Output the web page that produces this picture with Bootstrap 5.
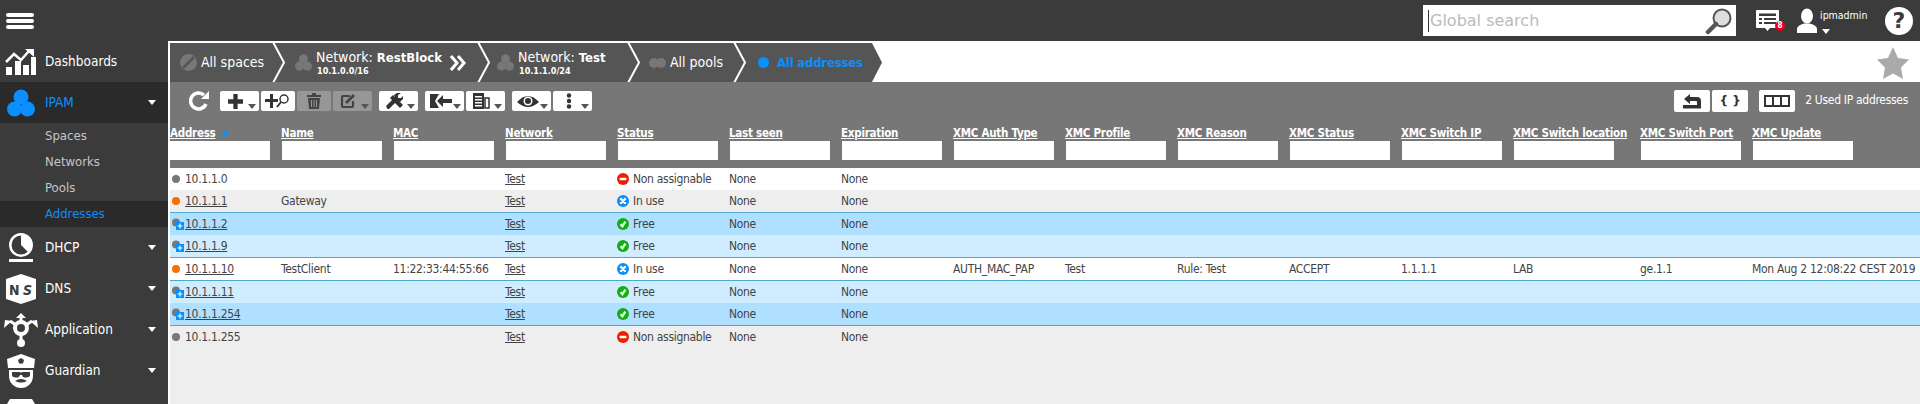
<!DOCTYPE html>
<html lang="en">
<head>
    <meta charset="UTF-8">
    <title>IPAM - All addresses</title>
    <link href="https://cdn.jsdelivr.net/npm/bootstrap@5.3.3/dist/css/bootstrap.min.css" rel="stylesheet">
    <style>
        html, body {
            height: 100%;
            overflow: hidden;
        }

        body {
            background-color: #eee;
            font-family: "DejaVu Sans", "Liberation Sans", sans-serif;
            font-stretch: condensed;
            font-size: 12px;
            letter-spacing: -0.3px;
            color: #444;
        }

        .top-bar {
            height: 41px;
            background-color: #3b3b3b;
        }

        .menu-bars {
            width: 28px;
            margin-left: 6px;
        }

        .menu-bars span {
            display: block;
            height: 4px;
            margin: 2px 0;
            background-color: #fff;
            border-radius: 2px;
        }

        .search-box {
            width: 313px;
            height: 31px;
            background-color: #fff;
            padding: 0 3px 0 5px;
        }

        .search-box span {
            border-left: 1px solid #333;
            color: #bbb;
            font-size: 16px;
            font-stretch: normal;
            letter-spacing: 0;
            padding-left: 1px;
            line-height: 22px;
        }

        .notif {
            width: 28px;
            height: 26px;
            margin-left: 19px;
        }

        .notif-count {
            position: absolute;
            left: 20px;
            top: 13px;
            width: 10px;
            height: 10px;
            border-radius: 50%;
            background-color: #e8001c;
            color: #fff;
            font-size: 8px;
            font-weight: 700;
            letter-spacing: 0;
            line-height: 10px;
            text-align: center;
        }

        .user-box {
            margin-left: 13px;
            width: 74px;
            height: 41px;
        }

        .user-box svg {
            margin-top: 8px;
            flex: none;
        }

        .user-name {
            color: #fff;
            font-size: 10.5px;
            letter-spacing: 0;
            line-height: 12px;
            padding-top: 9px;
            margin-left: 2px;
        }

        .help-dot {
            width: 28px;
            height: 28px;
            margin-left: 15px;
            margin-right: 7px;
            border-radius: 50%;
            background-color: #fff;
            color: #3b3b3b;
            font-size: 22px;
            font-weight: 700;
            font-stretch: normal;
            letter-spacing: 0;
            line-height: 28px;
            text-align: center;
        }

        .main-row {
            height: 363px;
            background-color: #3b3b3b;
        }

        .side-menu {
            width: 168px;
            flex: none;
            overflow: hidden;
            background-color: #3b3b3b;
            letter-spacing: 0;
        }

        .side-item {
            height: 41px;
            flex: none;
            color: #fff;
            font-size: 13.5px;
            text-decoration: none;
            padding-right: 12px;
        }

        .side-item.on {
            background-color: #2a2a2a;
            color: #0a8fff;
        }

        .side-ico {
            width: 45px;
            flex: none;
            display: flex;
            justify-content: center;
            padding-right: 4px;
        }

        .side-sub {
            height: 26px;
            flex: none;
            padding-left: 45px;
            color: #c6c6c6;
            font-size: 13px;
            line-height: 26px;
            text-decoration: none;
        }

        .side-sub.on {
            background-color: #2a2a2a;
            color: #0a8fff;
        }

        .tri-w {
            width: 0;
            height: 0;
            margin-left: auto;
            border-left: 4px solid transparent;
            border-right: 4px solid transparent;
            border-top: 5px solid #fff;
        }

        .work-area {
            flex: 1 1 auto;
            min-width: 0;
            background-color: #eee;
            border-left: 2px solid #fff;
            border-top: 2px solid #fff;
        }

        .crumb-row {
            height: 39px;
            background-color: #fff;
        }

        .crumb {
            height: 39px;
            flex: none;
            background-color: #555;
            color: #fff;
            font-size: 14px;
            letter-spacing: 0;
            line-height: 17px;
            white-space: nowrap;
        }

        .crumb b {
            font-size: 13px;
        }

        .crumb small {
            display: block;
            font-size: 9px;
            font-weight: 700;
            line-height: 10px;
            margin-left: 1px;
        }

        .crumb-spaces { width: 102px; padding-left: 10px; }
        .crumb-block { width: 191px; padding-left: 9px; }
        .crumb-test { width: 136px; padding-left: 6px; }
        .crumb-pools { width: 92px; padding-left: 8px; }
        .crumb-addrs {
            width: 125px;
            padding-left: 11px;
            color: #0a8fff;
            font-size: 13px;
            font-weight: 700;
            letter-spacing: -0.2px;
        }

        .crumb-sep {
            display: block;
            flex: none;
        }

        .fav-star {
            margin-left: auto;
            margin-right: 11px;
        }

        .tool-row {
            height: 43px;
            background-color: #777;
            padding-top: 9px;
        }

        .tool-refresh { margin: 0 11px 0 19px; }
        .tool-set-a { gap: 2px; }
        .tool-set-b { margin-left: 7px; }
        .tool-set-c { margin-left: 7px; gap: 2px; }
        .tool-set-d { gap: 2px; }
        .tool-set-d .tool-btn:nth-child(2) { margin-right: 9px; }

        .tool-btn {
            position: relative;
            display: inline-flex;
            align-items: center;
            justify-content: center;
            height: 20px;
            width: 39px;
            padding: 0;
            background-color: #fff;
            border: 0;
            border-radius: 2px;
            color: #333;
        }

        .tool-btn.narrow {
            width: 34px;
        }

        .tool-btn.off {
            background-color: #979797;
        }

        .tool-btn.tall {
            height: 22px;
            width: 36px;
            margin-top: -1px;
        }

        .tool-btn.has-menu::after {
            content: "";
            position: absolute;
            right: 3px;
            bottom: 2px;
            border-left: 4px solid transparent;
            border-right: 4px solid transparent;
            border-top: 5px solid #555;
        }

        .tool-btn.has-menu svg {
            margin-right: 8px;
        }

        .tool-count {
            color: #fff;
            font-size: 12px;
            margin-left: 10px;
            margin-right: 12px;
            line-height: 18px;
        }

        .addr-table {
            table-layout: fixed;
            width: 1750px;
            border-collapse: separate;
            border-spacing: 0;
        }

        .addr-table th {
            background-color: #777;
            padding: 0 0 8px 0;
            font-size: 11.5px;
            font-weight: 700;
            letter-spacing: -0.25px;
            vertical-align: top;
        }

        .addr-table th a {
            display: block;
            color: #fff;
            line-height: 16px;
            white-space: nowrap;
        }

        .addr-table th input {
            display: block;
            width: 100px;
            height: 19px;
            margin-left: 1px;
            border: 0;
            padding: 0;
        }

        .addr-table th:first-child input {
            margin-left: 0;
        }

        .addr-table td {
            height: 22px;
            padding: 0;
            white-space: nowrap;
            vertical-align: middle;
        }

        .addr-table td a {
            color: #444;
        }

        .sort-mark {
            width: 0;
            height: 0;
            margin: 3px 0 0 4px;
            border-left: 8px solid transparent;
            border-bottom: 8px solid #0a8fff;
        }

        .ip-cell {
            display: flex;
            align-items: center;
            padding-left: 2px;
        }

        .ip-ico {
            width: 13px;
            flex: none;
            display: flex;
        }

        .state-ico {
            margin-right: 4px;
            vertical-align: -2px;
        }

        tr.row-white td { background-color: #fff; }
        tr.row-grey td { background-color: #eee; }
        tr.row-blue td { background-color: #afe0ff; }
        tr.row-pale td { background-color: #d0edff; }
        tr.line-top td { height: 23px; border-top: 1px solid #4fa8cf; }
        tr.line-bottom td { height: 23px; border-bottom: 1px solid #4fa8cf; }
    </style>
</head>
<body>
<svg width="0" height="0" class="position-absolute">
    <symbol id="st-block" viewBox="0 0 12 12">
        <circle cx="6" cy="6" r="6" fill="#f01e00"/><rect x="2.5" y="4.7" width="7" height="2.6" rx="1" fill="#fff"/>
    </symbol>
    <symbol id="st-use" viewBox="0 0 12 12">
        <circle cx="6" cy="6" r="6" fill="#0a8fff"/><path d="M4 4l4 4M8 4l-4 4" stroke="#fff" stroke-width="2.4" stroke-linecap="round"/>
    </symbol>
    <symbol id="st-free" viewBox="0 0 12 12">
        <circle cx="6" cy="6" r="6" fill="#10b010"/><path d="M3.6 6.2l1.8 2 3-4.6" fill="none" stroke="#fff" stroke-width="2.2"/>
    </symbol>
    <symbol id="tri-cluster" viewBox="0 0 28 28">
        <circle cx="14" cy="8" r="7.5"/><circle cx="7.5" cy="20" r="7.5"/><circle cx="20.5" cy="20" r="7.5"/>
    </symbol>
    <symbol id="crumb-chevron" viewBox="0 0 14 39">
        <rect width="14" height="39" fill="#555"/><path d="M1-1l11 20.500L1 40" fill="none" stroke="#fff" stroke-width="2"/>
    </symbol>
</svg>

<header class="top-bar d-flex align-items-center">
    <div class="menu-bars"><span></span><span></span><span></span></div>
    <div class="search-box d-flex align-items-center ms-auto">
        <span>Global search</span>
        <svg class="ms-auto" width="28" height="28" viewBox="0 0 28 28">
            <circle cx="17" cy="11" r="8.500" fill="#ddd" stroke="#555" stroke-width="2"/>
            <path d="M11 17l-8 8" stroke="#555" stroke-width="4.500" stroke-linecap="round"/>
        </svg>
    </div>
    <div class="notif position-relative">
        <svg width="26" height="26" viewBox="0 0 26 26">
            <path d="M2 2h21a1 1 0 0 1 1 1v16a1 1 0 0 1-1 1h-8l-2.500 3-2.500-3H2a1 1 0 0 1-1-1V3a1 1 0 0 1 1-1z" fill="#fff"/>
            <path d="M4 5.500h17v2.500H4zM4 10h3v2H4zM9 10h12v2H9zM4 14h3v2H4zM9 14h12v2H9z" fill="#3b3b3b"/>
        </svg>
        <span class="notif-count">8</span>
    </div>
    <div class="user-box d-flex">
        <svg width="22" height="26" viewBox="0 0 22 26">
            <ellipse cx="11" cy="8" rx="6" ry="7.500" fill="#fff"/>
            <path d="M1 25v-4c0-3 4-4.500 7-5.500h6c3 1 7 2.500 7 5.500v4z" fill="#fff"/>
        </svg>
        <div>
            <div class="user-name">ipmadmin</div>
            <div class="tri-w ms-1 mt-2"></div>
        </div>
    </div>
    <div class="help-dot">?</div>
</header>

<div class="main-row d-flex">
    <nav class="side-menu d-flex flex-column">
        <a class="side-item d-flex align-items-center" href="#">
            <span class="side-ico">
                <svg width="32" height="28" viewBox="0 0 32 28" fill="#fff">
                    <path d="M1 14l8-8 7 6 8-9" fill="none" stroke="#fff" stroke-width="2.500"/>
                    <path d="M20 1h9v8z"/>
                    <path d="M1 19h6v8H1zM10 13h6v14h-6zM18 17h6v10h-6zM26 9h5v18h-5z"/>
                </svg>
            </span>
            Dashboards
        </a>
        <a class="side-item on d-flex align-items-center" href="#">
            <span class="side-ico"><svg width="28" height="28" fill="#0a8fff"><use href="#tri-cluster"/></svg></span>
            IPAM<span class="tri-w"></span>
        </a>
        <a class="side-sub" href="#">Spaces</a>
        <a class="side-sub" href="#">Networks</a>
        <a class="side-sub" href="#">Pools</a>
        <a class="side-sub on" href="#">Addresses</a>
        <a class="side-item d-flex align-items-center" href="#">
            <span class="side-ico">
                <svg width="26" height="30" viewBox="0 0 26 30" fill="#fff">
                    <circle cx="13" cy="12" r="10.700" fill="none" stroke="#fff" stroke-width="2.500"/>
                    <path d="M13 2a10 10 0 0 1 7 17l-7-7z"/>
                    <rect x="1" y="26" width="24" height="3"/>
                </svg>
            </span>
            DHCP<span class="tri-w"></span>
        </a>
        <a class="side-item d-flex align-items-center" href="#">
            <span class="side-ico">
                <svg width="32" height="30" viewBox="0 0 32 30">
                    <path d="M16 0l15 5v20l-15 5-15-5V5z" fill="#fff"/>
                    <text x="4" y="21" font-family="DejaVu Sans" font-size="14" font-weight="700" fill="#3b3b3b">N</text>
                    <text x="18" y="21" font-family="DejaVu Sans" font-size="14" font-weight="700" font-style="italic" fill="#3b3b3b">S</text>
                </svg>
            </span>
            DNS<span class="tri-w"></span>
        </a>
        <a class="side-item d-flex align-items-center" href="#">
            <span class="side-ico">
                <svg width="34" height="34" viewBox="0 0 34 34" fill="none" stroke="#fff">
                    <circle cx="17" cy="15" r="6" stroke-width="4"/>
                    <path d="M17 9V4M12 12L6 8M22 12l6-4M17 21v6" stroke-width="3"/>
                    <path d="M12 5l5-5 5 5zM0 15l1-8 7 1zM34 15l-1-8-7 1z" fill="#fff" stroke="none"/>
                    <circle cx="17" cy="30" r="4" fill="#fff" stroke="none"/>
                </svg>
            </span>
            Application<span class="tri-w"></span>
        </a>
        <a class="side-item d-flex align-items-center" href="#">
            <span class="side-ico">
                <svg width="32" height="34" viewBox="0 0 32 34">
                    <path d="M2 5l14-5 14 5-1 9H3z" fill="#fff"/>
                    <path d="M16 4l3 2-1 3.500h-4L13 6z" fill="#3b3b3b"/>
                    <path d="M4 16h24v6a12 12 0 0 1-24 0z" fill="#fff"/>
                    <path d="M7 18h8l1 1 1-1h8v2a4 3 0 0 1-8 1h-2a4 3 0 0 1-8-1z" fill="#3b3b3b"/>
                    <path d="M10 27q6-4 12 0q-6 3-12 0z" fill="#3b3b3b"/>
                </svg>
            </span>
            Guardian<span class="tri-w"></span>
        </a>
        <a class="side-item d-flex align-items-center" href="#">
            <span class="side-ico mb-auto pt-2">
                <svg width="36" height="20" viewBox="0 0 36 20"><path d="M7 0h22l6 10v10H1V10z" fill="#fff"/></svg>
            </span>
        </a>
    </nav>

    <main class="work-area">
        <nav class="crumb-row d-flex">
            <div class="crumb crumb-spaces d-flex align-items-center">
                <svg width="17" height="17" viewBox="0 0 17 17" class="me-1">
                    <circle cx="8.500" cy="8.500" r="8.500" fill="#777"/>
                    <path d="M3 14L14 3" stroke="#555" stroke-width="2.500"/>
                </svg>
                All spaces
            </div>
            <svg class="crumb-sep" width="14" height="39"><use href="#crumb-chevron"/></svg>
            <div class="crumb crumb-block d-flex align-items-center">
                <svg width="17" height="17" fill="#777" class="me-1"><use href="#tri-cluster"/></svg>
                <div>Network: <b>RestBlock</b><small>10.1.0.0/16</small></div>
                <svg width="16" height="16" viewBox="0 0 16 16" class="ms-2" fill="none" stroke="#fff" stroke-width="3"><path d="M1 1l6 7-6 7M8 1l6 7-6 7"/></svg>
            </div>
            <svg class="crumb-sep" width="14" height="39"><use href="#crumb-chevron"/></svg>
            <div class="crumb crumb-test d-flex align-items-center">
                <svg width="17" height="17" fill="#777" class="me-1"><use href="#tri-cluster"/></svg>
                <div>Network: <b>Test</b><small>10.1.1.0/24</small></div>
            </div>
            <svg class="crumb-sep" width="14" height="39"><use href="#crumb-chevron"/></svg>
            <div class="crumb crumb-pools d-flex align-items-center">
                <svg width="17" height="10" viewBox="0 0 17 10" fill="#777" class="me-1"><circle cx="5" cy="5" r="5"/><circle cx="12" cy="5" r="5"/></svg>
                All pools
            </div>
            <svg class="crumb-sep" width="14" height="39"><use href="#crumb-chevron"/></svg>
            <div class="crumb crumb-addrs d-flex align-items-center">
                <svg width="11" height="11" fill="#0a8fff" class="me-2"><circle cx="5.500" cy="5.500" r="5.500"/></svg>
                All addresses
            </div>
            <svg class="crumb-sep" width="10" height="39" viewBox="0 0 10 39"><path d="M0 0l10 19.500L0 39z" fill="#555"/></svg>
            <svg class="fav-star align-self-center" width="32" height="32" viewBox="0 0 32 32"><path d="M16 0l5 11 11 1.500-8 8 2 11.500-10-5.500L6 32l2-11.500-8-8L11 11z" fill="#aaa"/></svg>
        </nav>

        <div class="tool-row d-flex">
            <svg width="20" height="20" viewBox="0 0 20 20" class="tool-refresh">
                <path d="M17 13a8 8 0 1 1-2-9" fill="none" stroke="#fff" stroke-width="3.500"/>
                <path d="M12 8h8V0z" fill="#fff"/>
            </svg>
            <div class="d-flex tool-set-a">
                <button class="tool-btn has-menu"><svg width="15" height="15" viewBox="0 0 14 14"><path d="M5 0h4v5h5v4H9v5H5V9H0V5h5z" fill="#333"/></svg></button>
                <button class="tool-btn narrow"><svg width="26" height="14" viewBox="0 0 26 14"><path d="M5 0h3v5h5v3H8v6H5V8H0V5h5z" fill="#333"/><circle cx="19" cy="5" r="4" fill="#fff" stroke="#333" stroke-width="1.500"/><path d="M16 8l-4 5" stroke="#333" stroke-width="2"/></svg></button>
                <button class="tool-btn narrow off"><svg width="14" height="16" viewBox="0 0 14 16" fill="#444"><path d="M0 2h5V0h4v2h5v2H0zM1 5h12l-1 11H2zM4 7v7h1V7zM6.500 7v7h1V7zM9 7v7h1V7z" fill-rule="evenodd"/></svg></button>
                <button class="tool-btn off has-menu"><svg width="18" height="16" viewBox="0 0 18 16" fill="none" stroke="#444" stroke-width="2.200"><path d="M10 3H3a1 1 0 0 0-1 1v9a1 1 0 0 0 1 1h9a1 1 0 0 0 1-1V8"/><path d="M6 10l8-8" stroke-width="3"/></svg></button>
            </div>
            <div class="d-flex tool-set-b">
                <button class="tool-btn has-menu">
                    <svg width="19" height="16" viewBox="0 0 19 16" fill="#333">
                        <path d="M5 5L15 15l3-3L8 2z"/>
                        <path d="M1 13l9-9-1-2 3-2h4l-3 2v3l3 0 2-2v3l-3 3-3-1-9 9z"/>
                    </svg>
                </button>
            </div>
            <div class="d-flex tool-set-c">
                <button class="tool-btn has-menu"><svg width="22" height="14" viewBox="0 0 22 14" fill="#333"><path d="M0 0h3v14H0zM3 0h6L5 7l4 7H3z"/><path d="M7 7l6-6v4h9v4h-9v4z"/></svg></button>
                <button class="tool-btn has-menu"><svg width="17" height="16" viewBox="0 0 17 16"><path d="M0 0h11v16H0z" fill="#333"/><path d="M2 3h7v1.500H2zM2 6h7v1.500H2zM2 9h7v1.500H2zM2 12h7v1.500H2z" fill="#fff"/><path d="M12 5h4v10h-4z" fill="none" stroke="#333" stroke-width="1.500"/></svg></button>
            </div>
            <div class="d-flex tool-set-c">
                <button class="tool-btn has-menu"><svg width="22" height="13" viewBox="0 0 22 13"><path d="M0 7q11-12 22 0q-11 10-22 0z" fill="#333"/><circle cx="11" cy="6" r="4.500" fill="#fff"/><circle cx="11" cy="6" r="3" fill="#333"/></svg></button>
                <button class="tool-btn has-menu"><svg width="6" height="16" viewBox="0 0 6 16" fill="#333"><circle cx="3" cy="2.500" r="2.200"/><circle cx="3" cy="8" r="2.200"/><circle cx="3" cy="13.500" r="2.200"/></svg></button>
            </div>
            <div class="d-flex ms-auto tool-set-d">
                <button class="tool-btn tall"><svg width="20" height="15" viewBox="0 0 20 15" fill="#333"><path d="M1 11h18v3.500H1zM8 0v3h7a4 4 0 0 1 4 4v4h-4V8a1 1 0 0 0-1-1H8v3L2 5z"/></svg></button>
                <button class="tool-btn tall fw-semibold">{ }</button>
                <button class="tool-btn tall"><svg width="26" height="12" viewBox="0 0 26 12" fill="none" stroke="#333" stroke-width="2"><rect x="1" y="1" width="24" height="10"/><path d="M9 1v10M17 1v10"/></svg></button>
            </div>
            <span class="tool-count">2 Used IP addresses</span>
        </div>

        <table class="addr-table">
            <colgroup id="colWidths"></colgroup>
            <thead><tr id="headRow"></tr></thead>
            <tbody id="addrRows"></tbody>
        </table>
    </main>
</div>

<script>
    const widths = [111, 112, 112, 112, 112, 112, 112, 112, 112, 112, 112, 112, 127, 112, 168];
    const heads = ["Address", "Name", "MAC", "Network", "Status", "Last seen", "Expiration", "XMC Auth Type",
        "XMC Profile", "XMC Reason", "XMC Status", "XMC Switch IP", "XMC Switch location", "XMC Switch Port", "XMC Update"];

    // ip, kind (dot colour or free-range icon), name, mac, status, row classes, xmc columns
    const rows = [
        ["10.1.1.0", "#777", "", "", "block", "row-white", []],
        ["10.1.1.1", "#f57000", "Gateway", "", "use", "row-grey", []],
        ["10.1.1.2", "range", "", "", "free", "row-blue line-top", []],
        ["10.1.1.9", "range", "", "", "free", "row-pale", []],
        ["10.1.1.10", "#f57000", "TestClient", "11:22:33:44:55:66", "use", "row-white line-top", ["AUTH_MAC_PAP", "Test", "Rule: Test", "ACCEPT", "1.1.1.1", "LAB", "ge.1.1", "Mon Aug 2 12:08:22 CEST 2019"]],
        ["10.1.1.11", "range", "", "", "free", "row-pale line-top", []],
        ["10.1.1.254", "range", "", "", "free", "row-blue line-bottom", []],
        ["10.1.1.255", "#777", "", "", "block", "row-grey", []]
    ];
    const statusText = { block: "Non assignable", use: "In use", free: "Free" };

    document.getElementById("colWidths").innerHTML = widths.map(w => `<col style="width:${w}px">`).join("");

    document.getElementById("headRow").innerHTML = heads.map((h, i) =>
        `<th><div class="d-flex"><a href="#">${h}</a>${i === 0 ? '<span class="sort-mark"></span>' : ''}</div><input type="text"></th>`
    ).join("");

    function ipIcon(kind) {
        if (kind === "range") {
            return `<svg width="12" height="12" viewBox="0 0 12 12"><circle cx="4" cy="4.500" r="4" fill="#777"/><rect x="4" y="4" width="8" height="8" fill="#0a8fff"/><path d="M8 5.500v5M5.500 8h5" stroke="#fff" stroke-width="1.200"/></svg>`;
        }
        return `<svg width="8" height="8"><circle cx="4" cy="4" r="4" fill="${kind}"/></svg>`;
    }

    document.getElementById("addrRows").innerHTML = rows.map(r => {
        const linked = r[1] !== "#777";
        const ip = linked ? `<a href="#">${r[0]}</a>` : r[0];
        const xmc = Array.from({ length: 8 }, (_, i) => `<td>${r[6][i] || ""}</td>`).join("");
        return `<tr class="${r[5]}">
            <td><div class="ip-cell"><span class="ip-ico">${ipIcon(r[1])}</span>${ip}</div></td>
            <td>${r[2]}</td><td>${r[3]}</td><td><a href="#">Test</a></td>
            <td><svg class="state-ico" width="12" height="12"><use href="#st-${r[4]}"/></svg>${statusText[r[4]]}</td>
            <td>None</td><td>None</td>${xmc}</tr>`;
    }).join("");
</script>
<script src="https://cdn.jsdelivr.net/npm/bootstrap@5.3.3/dist/js/bootstrap.bundle.min.js"></script>
</body>
</html>
